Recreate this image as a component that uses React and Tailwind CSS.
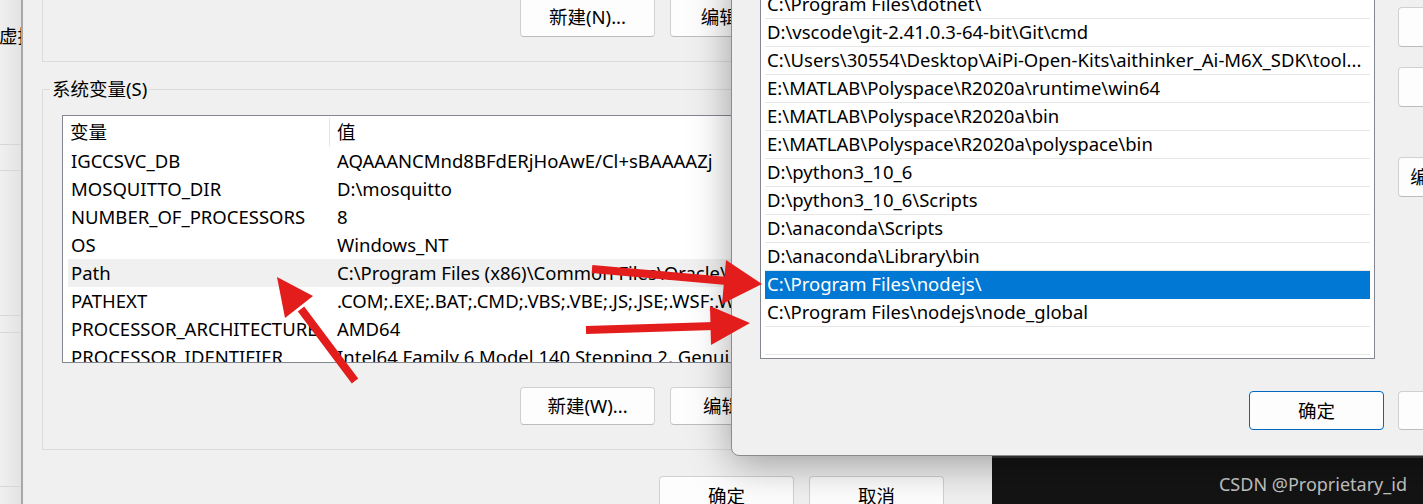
import React from 'react';

const sysVars = [
  ['IGCCSVC_DB', 'AQAAANCMnd8BFdERjHoAwE/Cl+sBAAAAZj'],
  ['MOSQUITTO_DIR', 'D:\\mosquitto'],
  ['NUMBER_OF_PROCESSORS', '8'],
  ['OS', 'Windows_NT'],
  ['Path', 'C:\\Program Files (x86)\\Common Files\\Oracle\\J'],
  ['PATHEXT', '.COM;.EXE;.BAT;.CMD;.VBS;.VBE;.JS;.JSE;.WSF;.W'],
  ['PROCESSOR_ARCHITECTURE', 'AMD64'],
  ['PROCESSOR_IDENTIFIER', 'Intel64 Family 6 Model 140 Stepping 2, Genui'],
];

const paths = [
  'C:\\Program Files\\dotnet\\',
  'D:\\vscode\\git-2.41.0.3-64-bit\\Git\\cmd',
  'C:\\Users\\30554\\Desktop\\AiPi-Open-Kits\\aithinker_Ai-M6X_SDK\\tool...',
  'E:\\MATLAB\\Polyspace\\R2020a\\runtime\\win64',
  'E:\\MATLAB\\Polyspace\\R2020a\\bin',
  'E:\\MATLAB\\Polyspace\\R2020a\\polyspace\\bin',
  'D:\\python3_10_6',
  'D:\\python3_10_6\\Scripts',
  'D:\\anaconda\\Scripts',
  'D:\\anaconda\\Library\\bin',
  'C:\\Program Files\\nodejs\\',
  'C:\\Program Files\\nodejs\\node_global',
];

const Btn = ({ children, primary, className = '' }) => (
  <div
    className={`w-[135px] shrink-0 flex items-center justify-center rounded-[4px] bg-[#fdfdfd] text-black ${
      primary ? 'border border-[#0067c0]' : 'border border-[#d0d0d0] border-b-[#bcbcbc]'
    } ${className}`}
  >
    {children}
  </div>
);

const Arrows = () => (
  <svg className="absolute inset-0 pointer-events-none" width="1423" height="504" viewBox="0 0 1423 504">
    <g fill="#e31c1c" stroke="#e31c1c" strokeLinecap="butt">
      <line x1="355" y1="381" x2="301" y2="309" strokeWidth="8" />
      <polygon points="277,277 313,296 285,318" stroke="none" />
      <line x1="592" y1="269" x2="727" y2="281" strokeWidth="8" />
      <polygon points="762,284 726,260 722,304" stroke="none" />
      <line x1="586" y1="330" x2="714" y2="326" strokeWidth="8" />
      <polygon points="750,323 710,306 711,345" stroke="none" />
    </g>
  </svg>
);

export default function App() {
  return (
    <div className="relative w-[1423px] h-[504px] overflow-hidden bg-[#141414] text-[18.5px] text-black font-['Noto_Sans','Noto_Sans_CJK_SC',sans-serif]">
      {/* window behind, left edge */}
      <div className="absolute left-0 top-0 w-[23px] h-full bg-gradient-to-r from-[#f0f0f0] to-[#e3e3e3] border-r-2 border-[#a8a8a8] overflow-hidden">
        <div className="h-[26px]" />
        <div className="w-[22px] overflow-hidden whitespace-nowrap leading-[20px] -ml-[1px]">虚拟</div>
        <div className="h-[98px]" />
        <div className="border-t border-[#d6d6d6] h-[26px]" />
        <div className="border-t border-[#d6d6d6] h-[145px]" />
        <div className="border-t border-[#d6d6d6] h-[17px]" />
        <div className="border-t border-[#d6d6d6] h-[154px]" />
        <div className="border-t border-[#d6d6d6]" />
      </div>

      {/* environment variables window */}
      <div className="absolute left-[23px] top-0 w-[969px] h-full bg-[#f0f0f0] overflow-hidden pl-[19px]">
        <div className="h-[62px] border-l border-b border-[#dcdcdc] flex items-end pb-[24px] pl-[477px] gap-[15px]">
          <Btn className="h-[40px]">新建(N)...</Btn>
          <Btn className="h-[40px]">编辑(E)...</Btn>
        </div>

        <fieldset className="mt-[17px] border border-r-0 border-[#dcdcdc] pl-[19px] pb-[24px]">
          <legend className="-ml-[12px] px-[2px] leading-[20px]">系统变量(S)</legend>
          <div className="mt-[16px] w-[700px] h-[248px] border border-[#828790] bg-white overflow-hidden">
            <div className="h-[31px] flex items-center">
              <div className="w-[266px] pl-[7px] h-full flex items-center">变量</div>
              <div className="w-px h-[28px] bg-[#e5e5e5]" />
              <div className="pl-[7px]">值</div>
            </div>
            {sysVars.map(([name, value]) => (
              <div
                key={name}
                className={`ml-[5px] h-[28px] pb-[1px] flex items-center whitespace-nowrap ${name === 'Path' ? 'bg-[#f0f0f0]' : ''}`}
              >
                <div className="w-[261px] shrink-0 pl-[3px] overflow-hidden">{name}</div>
                <div className="w-[402px] shrink-0 pl-[8px] overflow-hidden">{value}</div>
              </div>
            ))}
          </div>
          <div className="mt-[24px] flex gap-[15px] ml-[458px]">
            <Btn className="h-[38px]">新建(W)...</Btn>
            <Btn className="h-[38px]">编辑(I)...</Btn>
          </div>
        </fieldset>

        <div className="mt-[26px] flex gap-[15px] ml-[617px]">
          <Btn className="h-[40px]">确定</Btn>
          <Btn className="h-[40px]">取消</Btn>
        </div>
      </div>

      {/* dark window, bottom right */}
      <div className="absolute left-[992px] top-[456px] right-0 bottom-0 bg-[#141414] border-t-2 border-[#3a3a3a] flex items-center justify-end pr-[16px] pt-[6px]">
        <span className="text-[#c4c4c4] text-[18px] font-['Noto_Sans',sans-serif]">CSDN @Proprietary_id</span>
      </div>

      {/* edit environment variable dialog */}
      <div className="absolute left-[731px] top-[-40px] w-[831px] h-[496px] bg-[#f0f0f0] border border-[#8c8c8c] rounded-lg shadow-[0_8px_40px_rgba(0,0,0,0.35)] pl-[28px] flex flex-col">
        <div className="flex items-start gap-[23px]">
          <div className="mt-[28px] w-[615px] h-[370px] shrink-0 border border-[#828790] bg-white pt-[1px] px-[4px] overflow-hidden">
            {paths.map((p) => {
              const sel = p === 'C:\\Program Files\\nodejs\\';
              return (
                <div
                  key={p}
                  className={`h-[28px] pb-[2px] flex items-center pl-[2px] whitespace-nowrap border-b ${
                    sel ? 'bg-[#0078d4] text-white border-[#0078d4]' : 'border-[#e6e6e6]'
                  }`}
                >
                  {p}
                </div>
              );
            })}
            <div className="h-[28px] border-b border-[#e6e6e6]" />
          </div>
          <div className="mt-[46px] flex flex-col">
            <Btn className="h-[40px]">上移(U)</Btn>
            <Btn className="h-[40px] mt-[20px]">下移(O)</Btn>
            <Btn className="h-[40px] mt-[50px]">编辑文本(T)...</Btn>
          </div>
        </div>
        <div className="mt-[32px] flex gap-[14px] ml-[489px]">
          <Btn primary className="h-[39px]">确定</Btn>
          <Btn className="h-[39px]">取消</Btn>
        </div>
      </div>

      <Arrows />
    </div>
  );
}
